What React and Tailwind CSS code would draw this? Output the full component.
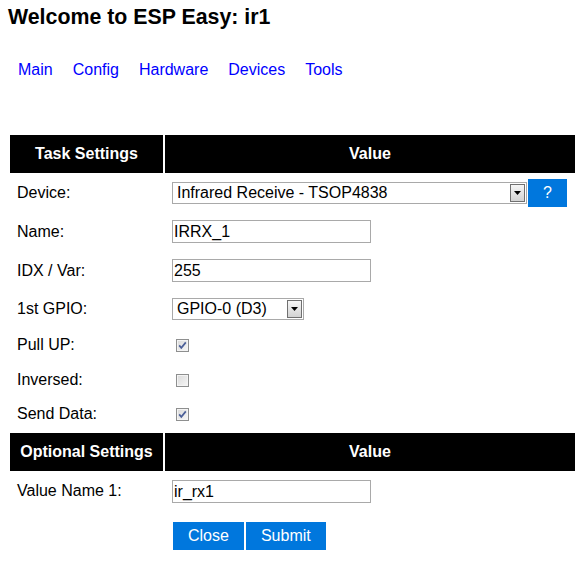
import React from 'react';

const font = { fontFamily: '"Liberation Sans", Arial, sans-serif' };

const menu = ['Main', 'Config', 'Hardware', 'Devices', 'Tools'];

const FakeSelect = ({ value, className }) => (
  <span
    className={`flex h-[22px] shrink-0 items-center justify-between border border-[#a9a9a9] bg-white ${className}`}
  >
    <span className="pl-[4px] leading-[18px] text-black">{value}</span>
    <span className="mr-[1px] flex h-[18px] w-[15px] items-center justify-center border border-[#707070] bg-gradient-to-b from-[#f6f6f6] to-[#d3d3d3]">
      <svg width="7" height="4" viewBox="0 0 7 4">
        <path d="M0 0 H7 L3.5 4 Z" fill="#000" />
      </svg>
    </span>
  </span>
);

const TextBox = ({ value }) => (
  <input
    readOnly
    defaultValue={value}
    className="block h-[23px] w-[199px] border border-[#a9a9a9] bg-white px-[1px] text-[16px] leading-[18px] text-black outline-none"
  />
);

const CheckBox = ({ checked }) => (
  <span className="ml-[4px] flex h-[18.4px] items-center">
    <svg width="13" height="13" viewBox="0 0 13 13">
      <defs>
        <linearGradient id="cbfill" x1="0" y1="0" x2="1" y2="1">
          <stop offset="0" stopColor="#d8d8d8" />
          <stop offset="1" stopColor="#f8f8f8" />
        </linearGradient>
      </defs>
      <rect x="0.5" y="0.5" width="12" height="12" fill="url(#cbfill)" stroke="#8e8f8f" />
      <rect x="1.5" y="1.5" width="10" height="10" fill="none" stroke="#f4f4f4" />
      {checked && (
        <path d="M3.2 6.4 L5.3 8.9 L9.8 3.4" fill="none" stroke="#4b5f98" strokeWidth="1.7" />
      )}
    </svg>
  </span>
);

const BlueButton = ({ children }) => (
  <span className="shrink-0 border border-white bg-[#0077dd] px-[15px] py-[5px] leading-[18px] text-white">
    {children}
  </span>
);

const Header = ({ left }) => (
  <tr>
    <th className="w-[153px] whitespace-nowrap bg-black p-[10px] text-center font-bold leading-[18.4px] text-white">
      {left}
    </th>
    <th className="whitespace-nowrap bg-black p-[10px] text-center font-bold leading-[18.4px] text-white">Value</th>
  </tr>
);

const Row = ({ label, children }) => (
  <tr>
    <td className="whitespace-nowrap p-[7px] align-middle leading-[18.4px]">{label}</td>
    <td className="whitespace-nowrap p-[7px] align-middle leading-[18.4px]">{children}</td>
  </tr>
);

export default function App() {
  return (
    <div className="min-h-[575px] bg-white pl-[8px] text-[16px] text-black" style={font}>
      <h1 className="mt-[5px] text-[21.33px] font-bold leading-[24px]">Welcome to ESP Easy: ir1</h1>

      <nav className="mt-[32px] flex h-[18px] leading-[18px]">
        {menu.map((item) => (
          <a key={item} href="#" className="mx-[10px] text-[#0000ff] no-underline">
            {item}
          </a>
        ))}
      </nav>

      <table className="mt-[54px] border-separate border-spacing-[2px]">
        <tbody>
          <Header left="Task Settings" />
          <Row label="Device:">
            <div className="flex h-[22px] items-center">
              <FakeSelect value="Infrared Receive - TSOP4838" className="w-[355px]" />
              <BlueButton>?</BlueButton>
            </div>
          </Row>
          <Row label="Name:">
            <TextBox value="IRRX_1" />
          </Row>
          <Row label="IDX / Var:">
            <TextBox value="255" />
          </Row>
          <Row label="1st GPIO:">
            <div className="flex h-[22px] items-center">
              <FakeSelect value="GPIO-0 (D3)" className="w-[132px]" />
            </div>
          </Row>
          <Row label="Pull UP:">
            <CheckBox checked />
          </Row>
          <Row label="Inversed:">
            <CheckBox checked={false} />
          </Row>
          <Row label="Send Data:">
            <CheckBox checked />
          </Row>
          <Header left="Optional Settings" />
          <Row label="Value Name 1:">
            <TextBox value="ir_rx1" />
          </Row>
          <tr>
            <td className="p-[7px]"></td>
            <td className="px-[7px] pt-[9px] pb-[7px]">
              <div className="flex">
                <BlueButton>Close</BlueButton>
                <BlueButton>Submit</BlueButton>
              </div>
            </td>
          </tr>
        </tbody>
      </table>
    </div>
  );
}
